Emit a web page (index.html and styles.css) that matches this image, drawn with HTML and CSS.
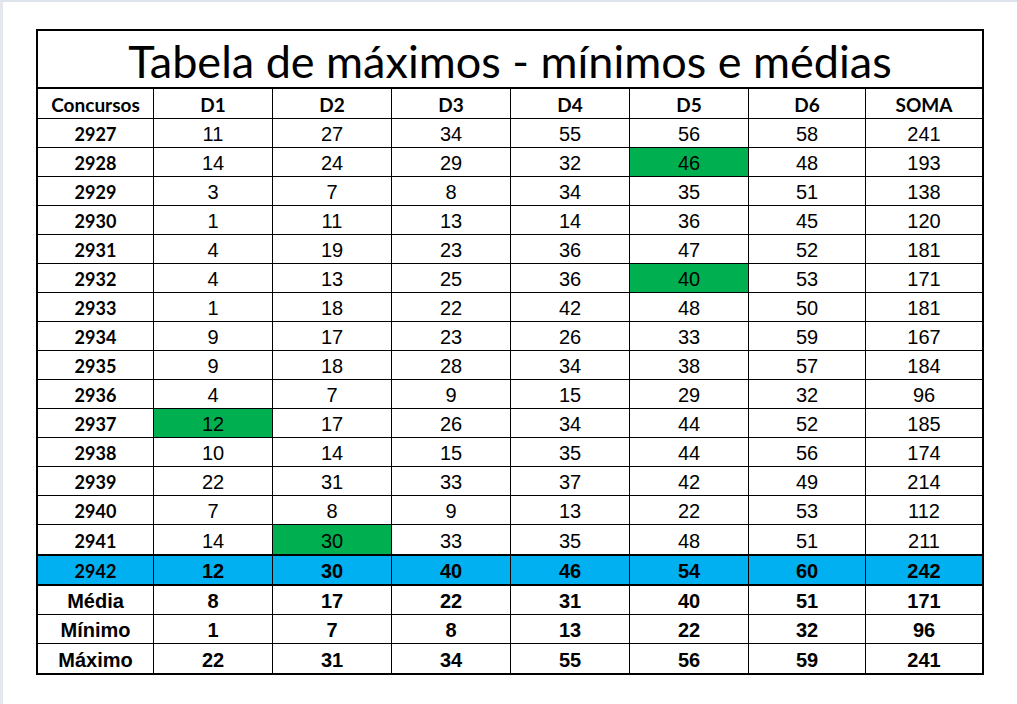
FILE: index.html
```html
<!DOCTYPE html>
<html lang="pt">
<head>
<meta charset="utf-8">
<title>Tabela de máximos - mínimos e médias</title>
<link rel="stylesheet" href="styles.css">
</head>
<body>
<div class="frame">
  <div class="sheet">
    <div class="title">Tabela de máximos - mínimos e médias</div>
    <div class="row head">
      <div class="c k">Concursos</div><div class="c k">D1</div><div class="c k">D2</div><div class="c k">D3</div><div class="c k">D4</div><div class="c k">D5</div><div class="c k">D6</div><div class="c k">SOMA</div>
    </div>
    <div class="row"><div class="c k">2927</div><div class="c">11</div><div class="c">27</div><div class="c">34</div><div class="c">55</div><div class="c">56</div><div class="c">58</div><div class="c">241</div></div>
    <div class="row"><div class="c k">2928</div><div class="c">14</div><div class="c">24</div><div class="c">29</div><div class="c">32</div><div class="c green">46</div><div class="c">48</div><div class="c">193</div></div>
    <div class="row"><div class="c k">2929</div><div class="c">3</div><div class="c">7</div><div class="c">8</div><div class="c">34</div><div class="c">35</div><div class="c">51</div><div class="c">138</div></div>
    <div class="row"><div class="c k">2930</div><div class="c">1</div><div class="c">11</div><div class="c">13</div><div class="c">14</div><div class="c">36</div><div class="c">45</div><div class="c">120</div></div>
    <div class="row"><div class="c k">2931</div><div class="c">4</div><div class="c">19</div><div class="c">23</div><div class="c">36</div><div class="c">47</div><div class="c">52</div><div class="c">181</div></div>
    <div class="row"><div class="c k">2932</div><div class="c">4</div><div class="c">13</div><div class="c">25</div><div class="c">36</div><div class="c green">40</div><div class="c">53</div><div class="c">171</div></div>
    <div class="row"><div class="c k">2933</div><div class="c">1</div><div class="c">18</div><div class="c">22</div><div class="c">42</div><div class="c">48</div><div class="c">50</div><div class="c">181</div></div>
    <div class="row"><div class="c k">2934</div><div class="c">9</div><div class="c">17</div><div class="c">23</div><div class="c">26</div><div class="c">33</div><div class="c">59</div><div class="c">167</div></div>
    <div class="row"><div class="c k">2935</div><div class="c">9</div><div class="c">18</div><div class="c">28</div><div class="c">34</div><div class="c">38</div><div class="c">57</div><div class="c">184</div></div>
    <div class="row"><div class="c k">2936</div><div class="c">4</div><div class="c">7</div><div class="c">9</div><div class="c">15</div><div class="c">29</div><div class="c">32</div><div class="c">96</div></div>
    <div class="row"><div class="c k">2937</div><div class="c green">12</div><div class="c">17</div><div class="c">26</div><div class="c">34</div><div class="c">44</div><div class="c">52</div><div class="c">185</div></div>
    <div class="row"><div class="c k">2938</div><div class="c">10</div><div class="c">14</div><div class="c">15</div><div class="c">35</div><div class="c">44</div><div class="c">56</div><div class="c">174</div></div>
    <div class="row"><div class="c k">2939</div><div class="c">22</div><div class="c">31</div><div class="c">33</div><div class="c">37</div><div class="c">42</div><div class="c">49</div><div class="c">214</div></div>
    <div class="row"><div class="c k">2940</div><div class="c">7</div><div class="c">8</div><div class="c">9</div><div class="c">13</div><div class="c">22</div><div class="c">53</div><div class="c">112</div></div>
    <div class="row before-current"><div class="c k">2941</div><div class="c">14</div><div class="c green">30</div><div class="c">33</div><div class="c">35</div><div class="c">48</div><div class="c">51</div><div class="c">211</div></div>
    <div class="row current"><div class="c k">2942</div><div class="c b">12</div><div class="c b">30</div><div class="c b">40</div><div class="c b">46</div><div class="c b">54</div><div class="c b">60</div><div class="c b">242</div></div>
    <div class="row stat"><div class="c b">Média</div><div class="c b">8</div><div class="c b">17</div><div class="c b">22</div><div class="c b">31</div><div class="c b">40</div><div class="c b">51</div><div class="c b">171</div></div>
    <div class="row stat"><div class="c b">Mínimo</div><div class="c b">1</div><div class="c b">7</div><div class="c b">8</div><div class="c b">13</div><div class="c b">22</div><div class="c b">32</div><div class="c b">96</div></div>
    <div class="row stat last"><div class="c b">Máximo</div><div class="c b">22</div><div class="c b">31</div><div class="c b">34</div><div class="c b">55</div><div class="c b">56</div><div class="c b">59</div><div class="c b">241</div></div>
  </div>
</div>
</body>
</html>
```

FILE: styles.css
```css
html, body {
  margin: 0;
  padding: 0;
  background: #ffffff;
}

.frame {
  width: 1017px;
  height: 704px;
  box-sizing: border-box;
  border-top: 2px solid #dde3ea;
  border-left: 3px solid #e4e8ee;
  padding: 27px 0 0 33px;
}

.sheet {
  width: 948px;
  box-sizing: border-box;
  border: 2px solid #000;
  display: flex;
  flex-direction: column;
  color: #000;
}

.title {
  height: 58px;
  border-bottom: 2px solid #000;
  display: flex;
  align-items: center;
  justify-content: center;
  font-family: "Lato", "Liberation Sans", sans-serif;
  font-size: 45px;
  line-height: 1;
  padding-top: 4px;
  box-sizing: border-box;
}

.row {
  display: grid;
  grid-template-columns: 116px 119px 119px 119px 119px 119px 117px 116px;
  height: 29px;
  box-sizing: border-box;
  border-bottom: 1px solid #000;
}

.row.head {
  height: 30px;
}

.row.before-current {
  border-bottom: 2px solid #000;
  height: 31px;
}

.row.current {
  background: #00b0f0;
  border-bottom: 2px solid #000;
  height: 30px;
}

.row.last {
  border-bottom: none;
  height: 29px;
}

.c {
  border-right: 1px solid #000;
  display: flex;
  align-items: center;
  justify-content: center;
  font-family: "Liberation Sans", Arial, sans-serif;
  font-size: 20px;
  line-height: 1;
  padding-top: 2px;
}

.c:last-child {
  border-right: none;
}

.c.k {
  font-family: "Lato", "Liberation Sans", sans-serif;
  font-weight: 700;
  font-size: 18px;
}

.head .c.k {
  font-size: 19px;
}

.c.b {
  font-weight: 700;
}

.c.green {
  background: #00b050;
}
```
